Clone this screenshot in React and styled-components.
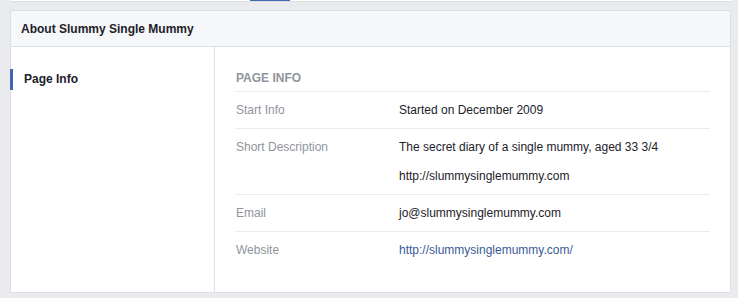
import React from "react";
import styled, { createGlobalStyle } from "styled-components";

const Global = createGlobalStyle`
  html, body { margin: 0; padding: 0; background: #e9ebee; }
  body { font-family: "Liberation Sans", Arial, Helvetica, sans-serif; font-size: 12px; color: #1d2129; }
`;

const Page = styled.div`
  width: 738px;
  height: 298px;
  overflow: hidden;
  background: #e9ebee;
`;

const TabStrip = styled.div`
  margin: 0 7px 0 10px;
  height: 1px;
  background: #ffffff;
  border-bottom: 1px solid #dddfe2;
  display: flex;
  padding-left: 240px;
`;

const ActiveTab = styled.div`
  width: 40px;
  height: 1px;
  background: #4267b2;
`;

const Card = styled.section`
  margin: 8px 7px 0 10px;
  width: 719px;
  border: 1px solid #dddfe2;
  background: #ffffff;
`;

const CardHeader = styled.header`
  height: 35px;
  display: flex;
  align-items: center;
  padding-left: 10px;
  background: #f6f7f9;
  border-bottom: 1px solid #dddfe2;
  font-weight: bold;
  font-size: 12px;
  color: #1d2129;
`;

const Body = styled.div`
  display: grid;
  grid-template-columns: 204px 1fr;
  height: 245px;
`;

const Sidebar = styled.nav`
  border-right: 1px solid #dddfe2;
  padding-top: 22px;
`;

const NavItem = styled.div`
  margin-left: -1px;
  height: 21px;
  line-height: 21px;
  padding-left: 11px;
  border-left: 3px solid ${(p) => (p.$active ? "#4267b2" : "transparent")};
  font-weight: bold;
  color: #1d2129;
`;

const Content = styled.div`
  padding: 23px 20px 0 20px;
`;

const SectionTitle = styled.h3`
  margin: 0;
  padding-bottom: 5px;
  padding-left: 1px;
  line-height: 16px;
  font-size: 12px;
  font-weight: bold;
  color: #90949c;
  text-transform: uppercase;
`;

const Row = styled.div`
  display: grid;
  grid-template-columns: 163px 1fr;
  border-top: 1px solid #e9ebee;
  padding: 10px 0 10px 1px;
  line-height: 16px;
`;

const Label = styled.div`
  color: #90949c;
`;

const Values = styled.div`
  display: flex;
  flex-direction: column;
  gap: 13px;
  color: #1d2129;
`;

const Link = styled.a`
  color: #3b5998;
  text-decoration: none;
`;

const rows = [
  { label: "Start Info", values: ["Started on December 2009"] },
  {
    label: "Short Description",
    values: ["The secret diary of a single mummy, aged 33 3/4", "http://slummysinglemummy.com"],
  },
  { label: "Email", values: ["jo@slummysinglemummy.com"] },
  { label: "Website", values: [<Link key="l" href="#">http://slummysinglemummy.com/</Link>] },
];

export default function App() {
  return (
    <Page>
      <Global />
      <TabStrip>
        <ActiveTab />
      </TabStrip>
      <Card>
        <CardHeader>About Slummy Single Mummy</CardHeader>
        <Body>
          <Sidebar>
            <NavItem $active>Page Info</NavItem>
          </Sidebar>
          <Content>
            <SectionTitle>Page Info</SectionTitle>
            {rows.map((r) => (
              <Row key={r.label}>
                <Label>{r.label}</Label>
                <Values>
                  {r.values.map((v, i) => (
                    <div key={i}>{v}</div>
                  ))}
                </Values>
              </Row>
            ))}
          </Content>
        </Body>
      </Card>
    </Page>
  );
}
